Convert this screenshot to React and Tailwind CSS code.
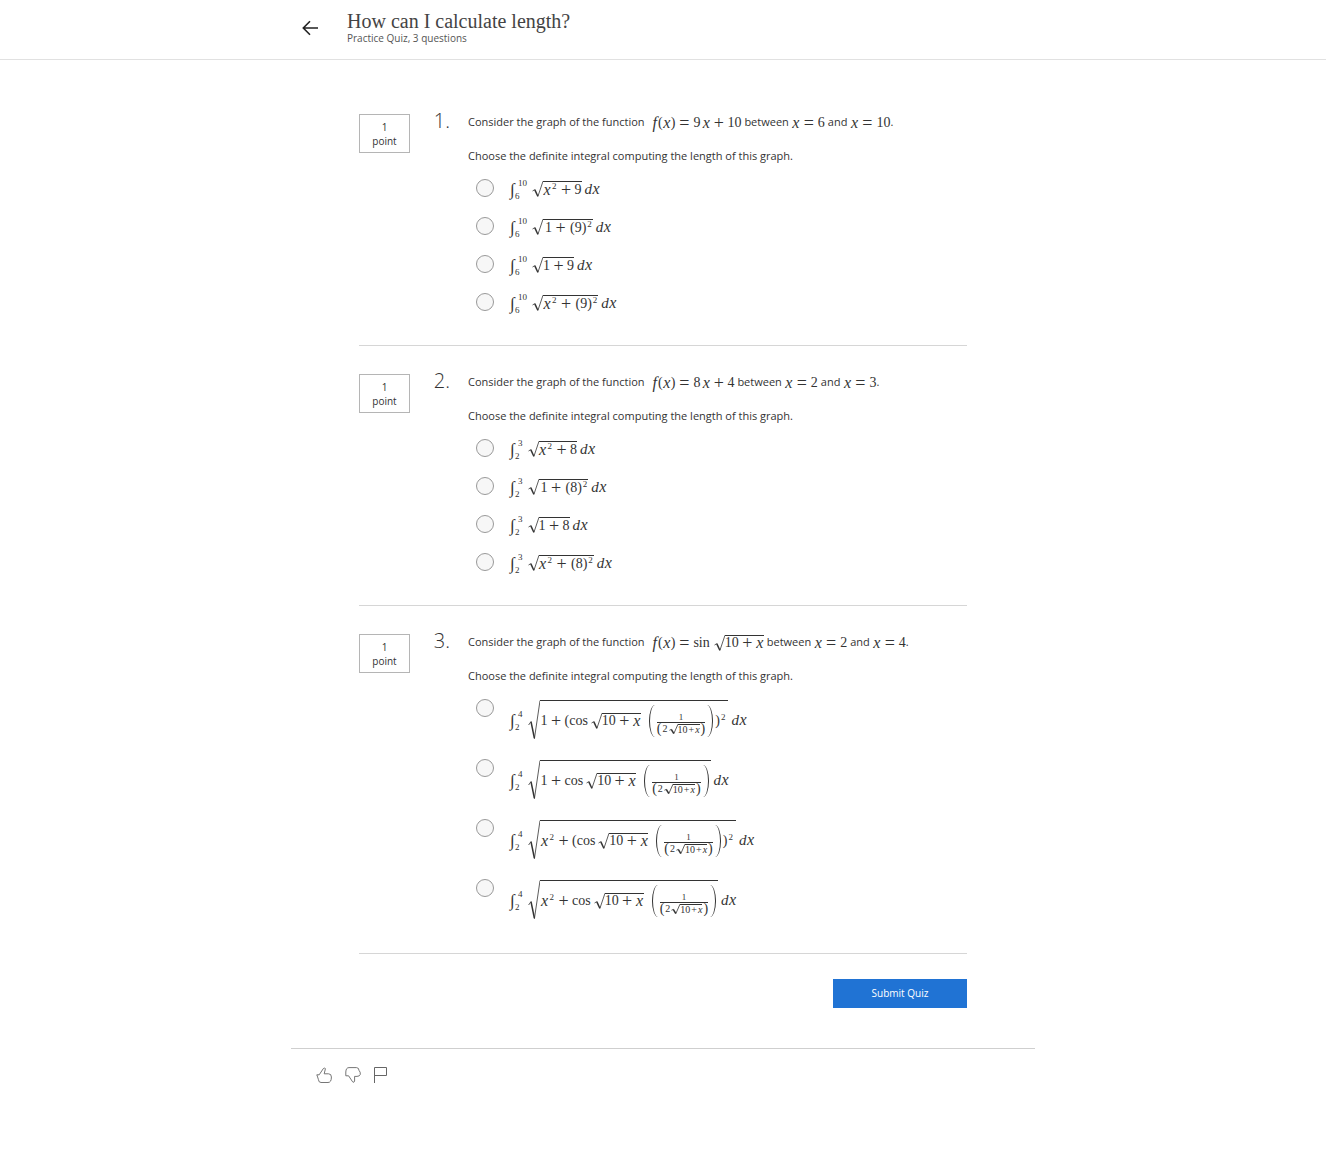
import React from "react";

/* ---------- math pieces ---------- */

function X() {
  return <i className="inline-block w-2 text-center text-[16px]">x</i>;
}

function Op({ children }) {
  return <span className="inline-block w-[17px] text-center text-[18px]">{children}</span>;
}

function Eq() {
  return <span className="inline-block w-[18px] text-center text-[18px]">=</span>;
}

function Sup({ children }) {
  return <span className="mx-px mb-1.5 text-[9px]">{children}</span>;
}

function Parens({ children }) {
  return (
    <>
      <span className="ml-px">(</span>
      {children}
      <span>)</span>
    </>
  );
}

function Row({ children }) {
  return <span className="inline-flex items-center whitespace-nowrap leading-none">{children}</span>;
}

function Hook({ className }) {
  return (
    <svg className={className} viewBox="0 0 10 20" preserveAspectRatio="none" fill="none" stroke="currentColor" aria-hidden="true">
      <path d="M0.5 12.5L2.5 10.8" strokeWidth="0.8" vectorEffect="non-scaling-stroke" />
      <path d="M2.5 10.8L5.3 19" strokeWidth="1.5" vectorEffect="non-scaling-stroke" />
      <path d="M5.3 19.5L10 0.3" strokeWidth="0.8" vectorEffect="non-scaling-stroke" />
    </svg>
  );
}

function Sqrt({ children }) {
  return (
    <span className="inline-flex h-4 items-stretch leading-none">
      <Hook className="h-4 w-[11px]" />
      <span className="inline-flex items-center border-t border-current">{children}</span>
    </span>
  );
}

function BigSqrt({ children }) {
  return (
    <span className="inline-flex h-10 items-stretch leading-none">
      <Hook className="h-10 w-3" />
      <span className="inline-flex items-center border-t border-current pr-0.5 pl-px">{children}</span>
    </span>
  );
}

function Integral({ from, to }) {
  return (
    <span className="mr-[5px] inline-flex h-6 items-center">
      <span className="w-[7px] text-[17px]">∫</span>
      <span className="flex h-6 flex-col justify-between pt-px text-[9px] leading-[10px]">
        <span className="pl-px">{to}</span>
        <span className="-ml-0.5">{from}</span>
      </span>
    </span>
  );
}

function Dx() {
  return (
    <i className="ml-[3px] inline-flex items-center text-[15px]">
      d<X />
    </i>
  );
}

function TenPlusX() {
  return (
    <Sqrt>
      10<Op>+</Op>
      <X />
    </Sqrt>
  );
}

function Fraction() {
  return (
    <span className="mx-0.5 mt-[7px] inline-flex flex-col items-center">
      <span className="pb-px text-[9px] leading-[8px]">1</span>
      <span className="flex h-[13px] items-center border-t border-current text-[10px]">
        <span className="mr-px text-[14px]">(</span>2
        <span className="ml-px inline-flex h-[10px] items-stretch">
          <Hook className="h-[10px] w-[9px]" />
          <span className="inline-flex items-center border-t border-current text-[10px]">
            10<span className="mx-px">+</span>
            <i>x</i>
          </span>
        </span>
        <span className="ml-px text-[14px]">)</span>
      </span>
    </span>
  );
}

function Chain() {
  return (
    <Row>
      <span className="mr-[3px]">cos</span>
      <TenPlusX />
      <span className="ml-2 h-8 w-[6px] rounded-[100%_0_0_100%/50%_0_0_50%] border-l border-current" />
      <Fraction />
      <span className="h-8 w-[6px] rounded-[0_100%_100%_0/0_50%_50%_0] border-r border-current" />
    </Row>
  );
}

function XSquared() {
  return (
    <Row>
      <X />
      <Sup>2</Sup>
    </Row>
  );
}

/* ---------- quiz data ---------- */

function simpleOptions(from, to, n) {
  return [
    <Row>
      <Integral from={from} to={to} />
      <Sqrt><XSquared /><Op>+</Op>{n}</Sqrt>
      <Dx />
    </Row>,
    <Row>
      <Integral from={from} to={to} />
      <Sqrt><span className="ml-0.5">1</span><Op>+</Op><Parens>{n}</Parens><Sup>2</Sup></Sqrt>
      <Dx />
    </Row>,
    <Row>
      <Integral from={from} to={to} />
      <Sqrt>1<Op>+</Op>{n}</Sqrt>
      <Dx />
    </Row>,
    <Row>
      <Integral from={from} to={to} />
      <Sqrt><XSquared /><Op>+</Op><Parens>{n}</Parens><Sup>2</Sup></Sqrt>
      <Dx />
    </Row>,
  ];
}

function chainOption(lead, squared) {
  return (
    <Row>
      <Integral from="2" to="4" />
      <BigSqrt>
        {lead}
        <Op>+</Op>
        {squared && "("}
        <Chain />
        {squared && <span className="ml-0.5">)</span>}
        {squared && <Sup>2</Sup>}
      </BigSqrt>
      <Dx />
    </Row>
  );
}

const questions = [
  {
    fn: <>9<span className="ml-0.5"><X /></span><Op>+</Op>10</>,
    from: "6",
    to: "10",
    options: simpleOptions("6", "10", "9"),
  },
  {
    fn: <>8<span className="ml-0.5"><X /></span><Op>+</Op>4</>,
    from: "2",
    to: "3",
    options: simpleOptions("2", "3", "8"),
  },
  {
    fn: <><span className="mr-1">sin</span><TenPlusX /></>,
    from: "2",
    to: "4",
    tall: true,
    options: [
      chainOption("1", true),
      chainOption("1", false),
      chainOption(<XSquared />, true),
      chainOption(<XSquared />, false),
    ],
  },
];

const MATH = "inline-flex items-center whitespace-nowrap font-['Liberation_Serif',serif] text-[14px] leading-none text-[#333]";

function Question({ q, index }) {
  return (
    <section className="flex items-start border-b border-[#d6d6d6] pt-7 pb-6 first:pt-0">
      <div className="flex h-[39px] w-[51px] shrink-0 flex-col items-center justify-center border border-[#b5b5b5] text-[10px] leading-[14px]">
        <span>1</span>
        <span>point</span>
      </div>
      <div className="w-[58px] shrink-0 pr-[18px] text-right text-[20px] leading-[14px] font-light">{index + 1}.</div>
      <fieldset className="min-w-0 flex-1">
        <legend className="contents">
          <span className="flex h-[17px] items-center whitespace-nowrap">
            Consider the graph of the function
            <span className={`${MATH} ml-2`}>
              <i className="mr-px text-[16px]">f</i>(<X />)<Eq />
              {q.fn}
            </span>
            <span className="mx-[3px]">between</span>
            <span className={MATH}><X /><Eq />{q.from}</span>
            <span className="mx-[3px]">and</span>
            <span className={MATH}><X /><Eq />{q.to}</span>.
          </span>
        </legend>
        <p className="mt-4 mb-[5px] leading-[17px]">
          Choose the definite integral computing the length of this graph.
        </p>
        {q.options.map((option, i) => (
          <label key={i} className={`flex items-start pt-[10px] pl-2 ${q.tall ? "h-[60px]" : "h-[38px]"}`}>
            <input
              type="radio"
              name={`question-${index + 1}`}
              className="size-[18px] shrink-0 appearance-none rounded-full border border-[#999] bg-[#f7f7f7] checked:bg-[#2073d4]"
            />
            <span className={`${MATH} ml-4 ${q.tall ? "mt-px h-10" : "h-5"}`}>{option}</span>
          </label>
        ))}
      </fieldset>
    </section>
  );
}

export default function App() {
  return (
    <div className="bg-white font-['Open_Sans',sans-serif] text-[11px] text-[#333]">
      <header className="border-b border-[#e1e1e1]">
        <div className="mx-auto flex h-[59px] max-w-[744px] items-start">
          <a href="#back" aria-label="Back" className="mt-5 ml-[11px] text-[#222]">
            <svg className="h-4 w-[17px]" viewBox="0 0 17 16" fill="none" stroke="currentColor" strokeWidth="1.6">
              <path d="M16 8H1.5M8 1.2L1.3 8L8 14.8" />
            </svg>
          </a>
          <div className="mt-[9px] ml-7">
            <h1 className="font-['Liberation_Serif',serif] text-[20px] leading-6 text-[#444]">How can I calculate length?</h1>
            <p className="text-[10px] leading-[11px] text-[#555]">Practice Quiz, 3 questions</p>
          </div>
        </div>
      </header>

      <main className="mx-auto max-w-[744px] border-b border-[#cfcfcf] px-[68px] pt-[54px] pb-10">
        <form onSubmit={(e) => e.preventDefault()}>
          <div>
            {questions.map((q, i) => (
              <Question key={i} q={q} index={i} />
            ))}
          </div>
          <div className="flex justify-end pt-[25px]">
            <button type="submit" className="h-[29px] w-[134px] bg-[#2073d4] text-[10px] text-white">
              Submit Quiz
            </button>
          </div>
        </form>
      </main>

      <footer className="mx-auto flex max-w-[744px] gap-[13px] px-[25px] pt-[18px] pb-16 text-[#666]">
        <button type="button" aria-label="Like">
          <svg className="size-4" viewBox="0 0 16 16" fill="none" stroke="currentColor" strokeWidth="0.9">
            <path d="M.8 7.8H3.2L7.3 1.6Q9 .2 9.4 1.8L8.2 6.8H12.5Q15.4 6.8 15.4 10Q15.4 15.5 12 15.5H5Q2.6 15.5 2.4 12.5Q1.6 9.8 .8 7.8Z" />
          </svg>
        </button>
        <button type="button" aria-label="Dislike">
          <svg className="size-4" viewBox="0 0 16 16" fill="none" stroke="currentColor" strokeWidth="0.9">
            <path d="M.8 8.8V5Q1 .6 4 .6H11.5Q14 .8 14 3.4Q15.6 5 15.3 7.4Q14.6 9.4 12 9.4H9.6V14Q9 16.2 7.6 14.8L3.6 8.8Z" />
          </svg>
        </button>
        <button type="button" aria-label="Report">
          <svg className="h-4 w-[13px]" viewBox="0 0 13 16" fill="none" stroke="currentColor">
            <path d="M.5 16V.5H12.5V8.5H.5" />
          </svg>
        </button>
      </footer>
    </div>
  );
}
